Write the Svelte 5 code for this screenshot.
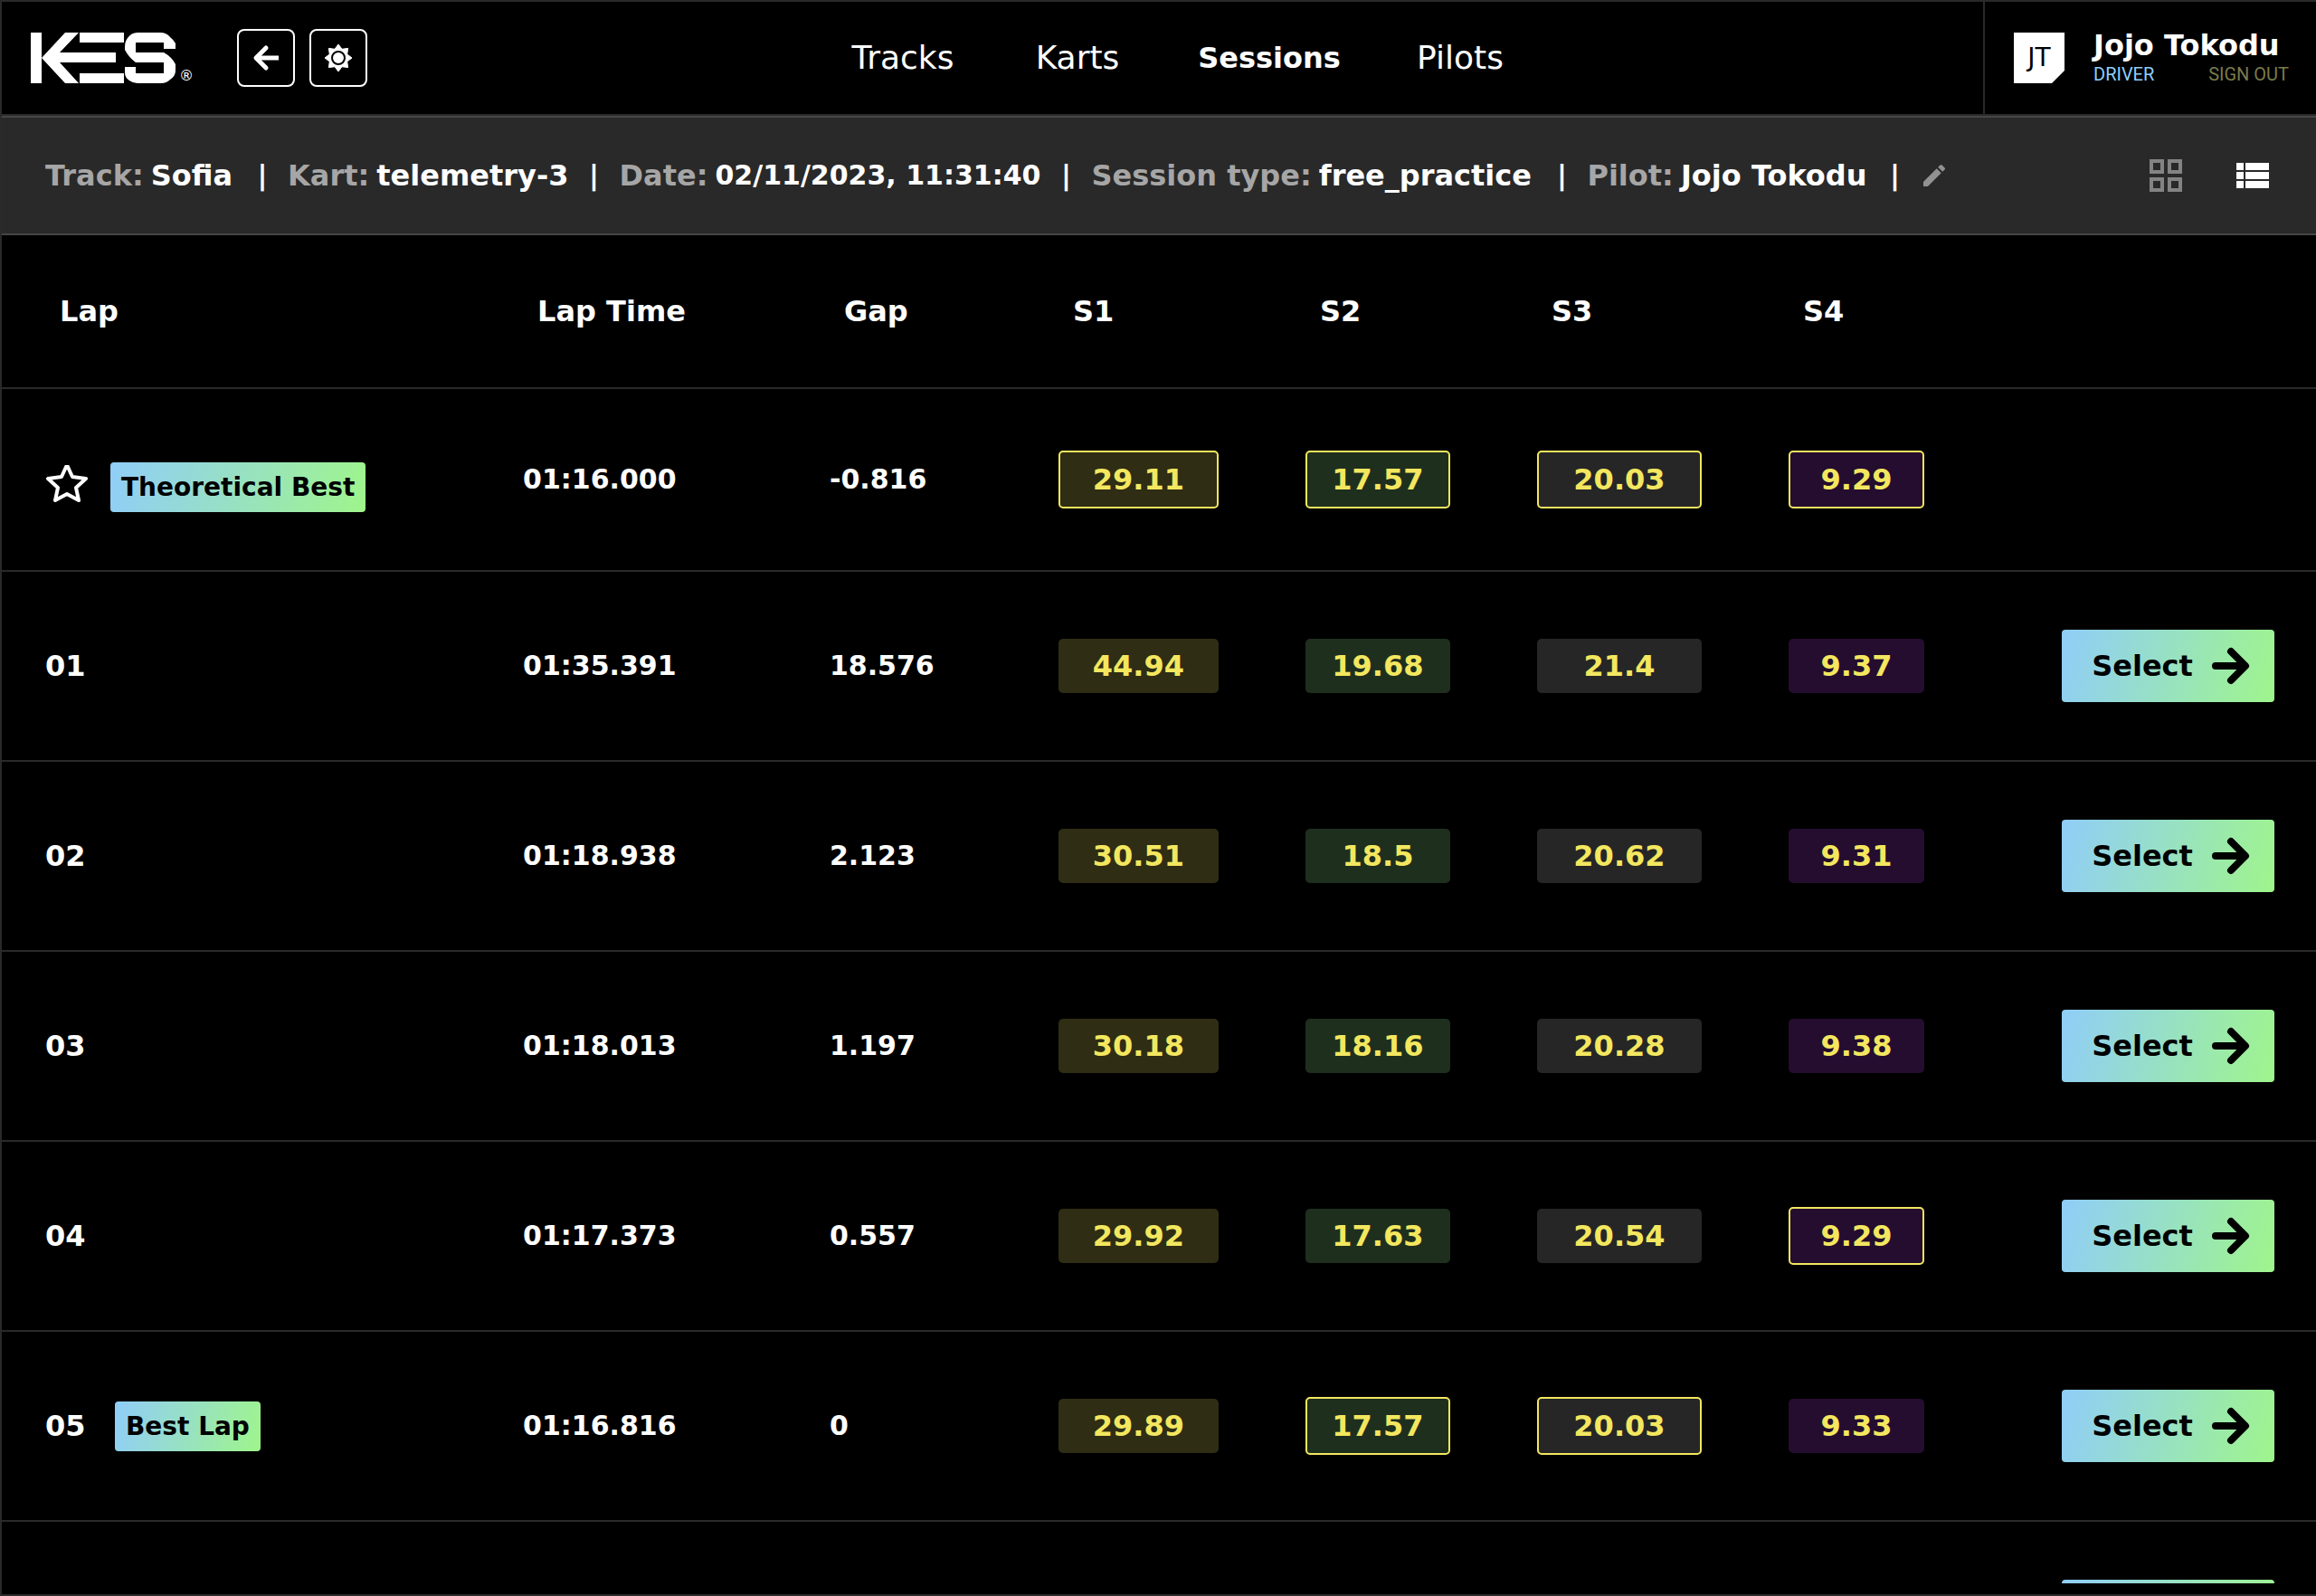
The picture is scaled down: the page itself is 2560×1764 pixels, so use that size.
<script>
  const nav = ['Tracks', 'Karts', 'Sessions', 'Pilots'];
  const active = 'Sessions';

  const details = [
    { label: 'Track:', value: 'Sofia', key: 'track' },
    { label: 'Kart:', value: 'telemetry-3', key: 'kart' },
    { label: 'Date:', value: '02/11/2023, 11:31:40', key: 'date' },
    { label: 'Session type:', value: 'free_practice', key: 'type' },
    { label: 'Pilot:', value: 'Jojo Tokodu', key: 'pilot' }
  ];

  const columns = ['Lap', 'Lap Time', 'Gap', 'S1', 'S2', 'S3', 'S4'];

  // `best` lists the sector indexes that hold the session's best time
  const laps = [
    { theoretical: true, badge: 'Theoretical Best', time: '01:16.000', gap: '-0.816', sectors: ['29.11', '17.57', '20.03', '9.29'], best: [0, 1, 2, 3] },
    { lap: '01', time: '01:35.391', gap: '18.576', sectors: ['44.94', '19.68', '21.4', '9.37'], best: [] },
    { lap: '02', time: '01:18.938', gap: '2.123', sectors: ['30.51', '18.5', '20.62', '9.31'], best: [] },
    { lap: '03', time: '01:18.013', gap: '1.197', sectors: ['30.18', '18.16', '20.28', '9.38'], best: [] },
    { lap: '04', time: '01:17.373', gap: '0.557', sectors: ['29.92', '17.63', '20.54', '9.29'], best: [3] },
    { lap: '05', badge: 'Best Lap', time: '01:16.816', gap: '0', sectors: ['29.89', '17.57', '20.03', '9.33'], best: [1, 2] },
    { pending: true, lap: '', time: '', gap: '', sectors: ['', '', '', ''], best: [] }
  ];
</script>

<div class="app">
  <header>
    <div class="brand">
      <a class="logo" href="#home" aria-label="KES home">
        <svg width="160" height="56" viewBox="0 0 160 56" fill="#fff" aria-hidden="true">
          <path d="M0 0h12v56H0z" />
          <path d="M12 28 38 0h15L32 22h62v11H32l21 23H38z" />
          <path d="M54 0h49v11H54zM54 45h49v11H54z" />
          <path d="M160 18v-6Q158 8 154 5Q150 0 143 0H118Q111 0 107 6Q104 10 104 16V19Q108 27 116 33H147V45H116V38H104V44Q104 50 109 53Q113 56 118 56H144Q150 56 154 52Q160 48 160 42V35Q156 27 147 22H116V11H147V18Z" />
        </svg>
        <span class="reg">®</span>
      </a>
      <div class="tools">
        <button class="square" aria-label="Back">
          <svg width="32" height="32" viewBox="0 0 32 32" fill="none" stroke="#fff" stroke-width="5" stroke-linecap="round" stroke-linejoin="round">
            <path d="M16 5 5 16l11 11" /><path d="M6 16h24" stroke-linecap="butt" />
          </svg>
        </button>
        <button class="square" aria-label="Theme">
          <svg width="32" height="32" viewBox="0 0 32 32">
            <path fill="#fff" stroke="#fff" stroke-width="1" stroke-linejoin="round" d="M16 1l4 5.300 6.600-.9-.9 6.600L31 16l-5.300 4 .9 6.600-6.600-.9L16 31l-4-5.300-6.600.9.9-6.600L1 16l5.300-4-.9-6.600 6.600.9z" />
            <circle cx="16" cy="16" r="7" fill="#fff" stroke="#000" stroke-width="2" />
          </svg>
        </button>
      </div>
    </div>

    <nav>
      {#each nav as item}
        <a href="#{item.toLowerCase()}" class:active={item === active}>{item}</a>
      {/each}
    </nav>

    <div class="user">
      <div class="avatar">JT</div>
      <div class="info">
        <div class="name">Jojo Tokodu</div>
        <div class="meta">
          <span class="role">DRIVER</span>
          <a class="signout" href="#signout">SIGN OUT</a>
        </div>
      </div>
    </div>
  </header>

  <section class="session">
    <div class="details">
      {#each details as d}
        <div class="detail {d.key}"><span class="label">{d.label}</span><span class="value">{d.value}</span></div>
        <span class="bar">|</span>
      {/each}
      <button class="icon" aria-label="Edit session">
        <svg width="32" height="32" viewBox="0 0 24 24" fill="#929292">
          <path d="M3 17.25V21h3.75L17.81 9.94l-3.75-3.75zM20.71 7.04a1 1 0 0 0 0-1.41l-2.34-2.34a1 1 0 0 0-1.41 0l-1.83 1.83 3.75 3.75z" />
        </svg>
      </button>
    </div>
    <div class="views">
      <button class="icon" aria-label="Grid view">
        <svg width="36" height="36" viewBox="0 0 36 36" fill="none" stroke="#838383" stroke-width="4">
          <path d="M2 2h12v12H2zM22 2h12v12H22zM2 22h12v12H2zM22 22h12v12H22z" />
        </svg>
      </button>
      <button class="icon" aria-label="List view">
        <svg width="36" height="28" viewBox="0 0 36 28" fill="#fff">
          <path d="M0 0h8v8H0zM10 0h26v8H10zM0 10h8v8H0zM10 10h26v8H10zM0 20h8v8H0zM10 20h26v8H10z" />
        </svg>
      </button>
    </div>
  </section>

  <main>
    <div class="scroll">
      <table>
        <colgroup>
          <col class="c-lap" /><col class="c-time" /><col class="c-gap" />
          <col class="c-s1" /><col class="c-s2" /><col class="c-s3" /><col class="c-s4" /><col />
        </colgroup>
        <thead>
          <tr>
            {#each columns as c}<th scope="col">{c}</th>{/each}
            <td></td>
          </tr>
        </thead>
        <tbody>
          {#each laps as row}
            <tr class:theoretical={row.theoretical}>
              <td>
                <div class="lap">
                  {#if row.theoretical}
                    <svg width="48" height="48" viewBox="0 0 48 48" fill="none" stroke="#fff" stroke-width="4" stroke-linejoin="round" aria-hidden="true">
                      <path d="M24 0l6 13 15 2-11 10 3 14L24 32l-13 7L14 25 3 15l15-2z" />
                    </svg>
                  {:else}
                    <span class="num">{row.lap}</span>
                  {/if}
                  {#if row.badge}<span class="badge">{row.badge}</span>{/if}
                </div>
              </td>
              <td class="num">{row.time}</td>
              <td class="num">{row.gap}</td>
              {#each row.sectors as s, i}
                <td><span class="chip s{i + 1}" class:best={row.best.includes(i)}>{s}</span></td>
              {/each}
              <td class="action">
                {#if !row.theoretical}
                  <button class="select" aria-label="Select lap">
                    <span class="select-label">{row.pending ? '' : 'Select'}</span>
                    <svg width="44" height="44" viewBox="0 0 44 44" fill="none" stroke="#000" stroke-width="8" stroke-linecap="round" stroke-linejoin="round" aria-hidden="true">
                      <path d="M22 6l16 16-16 16M5 22h32" />
                    </svg>
                  </button>
                {/if}
              </td>
            </tr>
          {/each}
        </tbody>
      </table>
    </div>
  </main>
</div>

<style>
  :global(body) {
    background: #000;
  }

  .app,
  .app * {
    box-sizing: border-box;
  }

  .app {
    display: flex;
    flex-direction: column;
    height: 100vh;
    overflow: hidden;
    background: #000;
    color: #fff;
    border: 2px solid #2a2a2b;
    border-right: 0;
    font-family: 'DejaVu Sans', sans-serif;
    font-size: 32px;
    line-height: 40px;
    white-space: nowrap;
  }

  a {
    color: inherit;
    text-decoration: none;
  }

  button {
    font: inherit;
    padding: 0;
    border: 0;
    background: none;
    cursor: pointer;
  }

  svg {
    display: block;
    flex: none;
  }

  header {
    flex: none;
    display: flex;
    justify-content: space-between;
    height: 126px;
    padding-left: 32px;
    border-bottom: 2px solid #2a2a2a;
  }

  .brand {
    display: flex;
    align-items: center;
    gap: 48px;
  }

  .logo {
    display: flex;
    align-items: flex-end;
    gap: 4px;
    height: 56px;
  }

  .reg {
    width: 16px;
    font-size: 16px;
    line-height: 16px;
  }

  .tools {
    display: flex;
    gap: 16px;
  }

  .square {
    display: grid;
    place-items: center;
    width: 64px;
    height: 64px;
    border: 2px solid #fff;
    border-radius: 8px;
  }

  nav {
    display: grid;
    grid-template-columns: 126px 100px 164px 98px;
    align-items: center;
    gap: 80px;
    font-size: 36px;
  }

  nav a {
    display: flex;
    justify-content: center;
  }

  nav .active {
    font-size: 32px;
    font-weight: 700;
  }

  .user {
    display: flex;
    align-items: center;
    gap: 32px;
    padding: 0 30px 0 32px;
    border-left: 2px solid #2a2a2a;
  }

  .avatar {
    display: grid;
    place-items: center;
    width: 56px;
    height: 56px;
    background: #fff;
    color: #000;
    font-size: 28px;
    clip-path: polygon(0 0, 100% 0, 100% 75%, 75% 100%, 0 100%);
  }

  .info {
    min-width: 216px;
  }

  .name {
    font-weight: 700;
    line-height: 36px;
  }

  .meta {
    display: flex;
    justify-content: space-between;
    font-family: Roboto, sans-serif;
    font-size: 20px;
    line-height: 28px;
  }

  .role {
    color: #90cdf9;
  }

  .signout {
    color: #7b7a4b;
  }

  .session {
    flex: none;
    display: flex;
    align-items: center;
    justify-content: space-between;
    height: 132px;
    padding: 0 52px 0 48px;
    background: #292929;
    border-top: 2px solid #464646;
    border-bottom: 2px solid #464646;
    font-weight: 700;
  }

  .details {
    display: flex;
    align-items: center;
  }

  .detail {
    display: flex;
    gap: 8px;
  }

  .track { min-width: 212px; }
  .kart { min-width: 308px; }
  .date { min-width: 464px; }
  .type { min-width: 492px; }
  .pilot { min-width: 312px; }

  .date .value {
    font-size: 30px;
  }

  .label {
    color: #a6a6a6;
  }

  .bar {
    width: 56px;
    font-size: 30px;
    text-align: center;
  }

  .icon {
    display: grid;
    place-items: center;
  }

  .views {
    display: flex;
    align-items: center;
    gap: 60px;
  }

  main {
    flex: 1;
    min-height: 0;
    display: flex;
    padding-bottom: 12px;
  }

  .scroll {
    flex: 1;
    overflow: hidden;
  }

  table {
    width: 100%;
    table-layout: fixed;
    border-collapse: separate;
    border-spacing: 0;
    font-weight: 700;
  }

  .c-lap { width: 22.52%; }
  .c-time { width: 13.25%; }
  .c-gap { width: 9.89%; }
  .c-s1 { width: 10.67%; }
  .c-s2 { width: 10.01%; }
  .c-s3 { width: 10.87%; }
  .c-s4 { width: 9.62%; }

  th,
  td {
    height: 210px;
    padding: 0;
    border-bottom: 2px solid #2a2a2a;
    text-align: left;
    vertical-align: middle;
  }

  thead th,
  thead td {
    height: 170px;
    padding-left: 16px;
  }

  thead th:first-child {
    padding-left: 64px;
  }

  .theoretical td {
    height: 202px;
  }

  tbody td:first-child {
    padding-left: 48px;
  }

  .num {
    font-size: 30px;
  }

  .lap {
    display: flex;
    align-items: center;
    gap: 24px;
  }

  .lap .num {
    width: 53px;
    font-size: 32px;
  }

  .theoretical .lap {
    padding-top: 16px;
  }

  .badge {
    padding: 0 12px;
    border-radius: 4px;
    background: linear-gradient(105deg, #90cdf9, #9ff58b);
    color: #000;
    font-size: 28px;
    line-height: 55px;
  }

  .chip {
    display: block;
    margin-right: 96px;
    border-radius: 5px;
    color: #f3e75f;
    line-height: 60px;
    text-align: center;
  }

  .s1 { background: #2f2d14; }
  .s2 { background: #1f2f1e; }
  .s3 { background: #262626; }
  .s4 { background: #250d2f; }

  .best {
    border: 2px solid #f3e75f;
  }

  .action {
    padding-right: 46px;
  }

  .select {
    display: flex;
    align-items: center;
    gap: 20px;
    height: 80px;
    margin-left: auto;
    padding: 0 26px 0 33px;
    border-radius: 4px;
    background: linear-gradient(105deg, #90cdf9, #9ff58b);
    color: #000;
  }

  .select-label {
    min-width: 112px;
  }
</style>
